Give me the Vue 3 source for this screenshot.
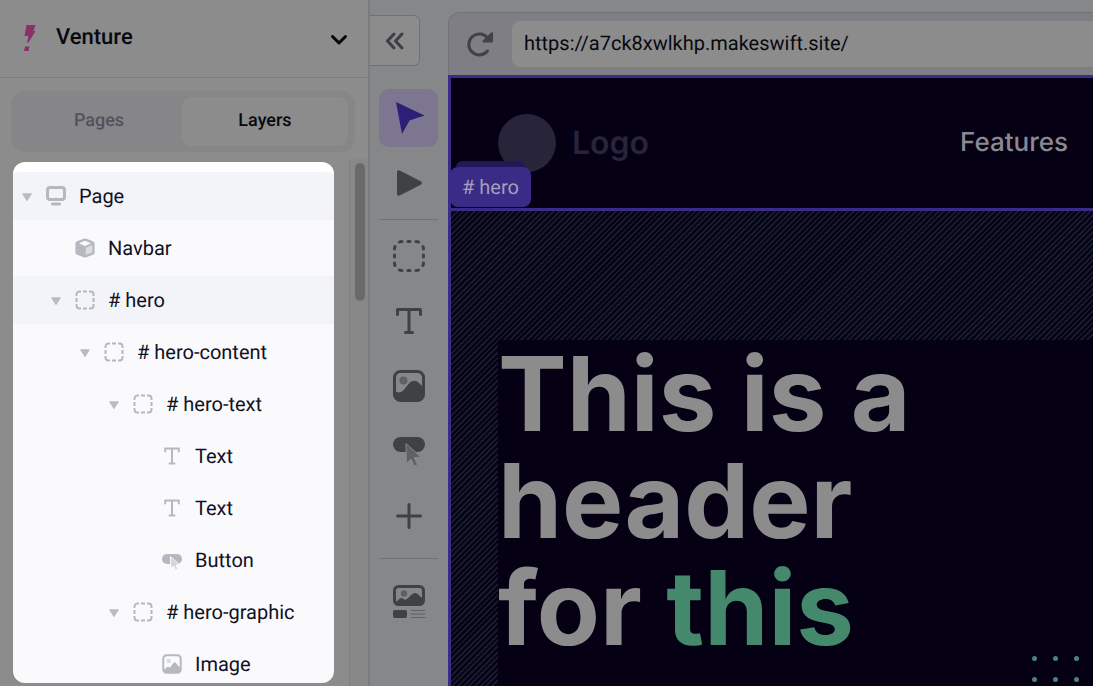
<script setup>
import { ref } from 'vue'

const url = ref('https://a7ck8xwlkhp.makeswift.site/')

const layers = [
  { name: 'Page', icon: 'page', depth: 0, open: true, active: true },
  { name: 'Navbar', icon: 'cube', depth: 1 },
  { name: '# hero', icon: 'box', depth: 1, open: true, active: true },
  { name: '# hero-content', icon: 'box', depth: 2, open: true },
  { name: '# hero-text', icon: 'box', depth: 3, open: true },
  { name: 'Text', icon: 'text', depth: 4 },
  { name: 'Text', icon: 'text', depth: 4 },
  { name: 'Button', icon: 'button', depth: 4 },
  { name: '# hero-graphic', icon: 'box', depth: 3, open: true },
  { name: 'Image', icon: 'image', depth: 4 },
]
</script>

<template>
  <div class="app">
    <aside class="sidebar">
      <button class="site" type="button">
        <svg class="bolt" viewBox="0 0 14 28" aria-hidden="true">
          <path d="M4.500 1H13.500L11.500 7H13.500L6.500 18.500H5L6.500 12H2.500Z" />
          <path d="M3 22.500H7.500L6.500 27H2Z" />
        </svg>
        <span class="site-name">Venture</span>
        <svg class="chevron" viewBox="0 0 18 12" aria-hidden="true">
          <path d="M2.500 2.500 9 9l6.500-6.500" />
        </svg>
      </button>

      <div class="tabs" role="tablist">
        <button class="tab" role="tab" type="button" aria-selected="false">Pages</button>
        <button class="tab selected" role="tab" type="button" aria-selected="true">Layers</button>
      </div>

      <div class="list">
        <ul class="tree" aria-label="Layers">
          <li
            v-for="(layer, i) in layers"
            :key="i"
            class="row"
            :class="{ active: layer.active }"
            :style="{ paddingLeft: 9 + layer.depth * 29 + 'px' }"
          >
            <span class="caret">
              <svg v-if="layer.open" viewBox="0 0 10 8" aria-hidden="true">
                <path d="M1 .3h8a.7.7 0 0 1 .6 1L5.600 7.400a.7.7 0 0 1-1.200 0L.4 1.300A.7.7 0 0 1 1 .3Z" />
              </svg>
            </span>
            <svg class="icon" viewBox="0 0 20 20" aria-hidden="true">
              <template v-if="layer.icon === 'page'">
                <rect class="line" x="1.500" y="1.500" width="17" height="12" rx="2.500" />
                <path class="line" d="M6.500 18h7" />
              </template>
              <template v-else-if="layer.icon === 'cube'">
                <path class="fill" d="M8.800.8a3 3 0 0 1 2.400 0l6.800 2.500a2.500 2.500 0 0 1 1.600 2.400v8.600a2.500 2.500 0 0 1-1.600 2.400l-6.800 2.600a3 3 0 0 1-2.400 0L2 16.700a2.500 2.500 0 0 1-1.600-2.400V5.700A2.500 2.500 0 0 1 2 3.300Z" />
                <path class="light" d="m10 2.800 6 2.500-6 2.600-6-2.600Z" />
                <path class="mid" d="m10.800 9.800 6.500-2.600v7.300l-6.500 2.600Z" />
              </template>
              <path
                v-else-if="layer.icon === 'box'"
                class="dash"
                d="M1.500 6V4.500a3 3 0 0 1 3-3H6M8 1.500h4M14 1.500h1.500a3 3 0 0 1 3 3V6M18.500 8v4M18.500 14v1.500a3 3 0 0 1-3 3H14M12 18.500H8M6 18.500H4.500a3 3 0 0 1-3-3V14M1.500 12V8"
              />
              <path
                v-else-if="layer.icon === 'text'"
                class="glyph"
                d="M3.200 5.500V2.500h13.600v3M10 2.500v15M7.500 17.500h5"
              />
              <template v-else-if="layer.icon === 'button'">
                <rect class="fill" x="0" y="4" width="20" height="10" rx="5" />
                <path class="pointer" d="m8.500 7 .4 11.500 2.800-2.400 1.800 4 2.300-1-1.800-4 3.300-.2Z" />
              </template>
              <template v-else>
                <rect class="frame-small" x="1.250" y="1.250" width="17.500" height="17.500" rx="3.500" />
                <circle class="mid" cx="6.800" cy="7" r="2.300" />
                <path class="fill" d="m1.500 16 4.500-3.500 1.800 1.200 4.700-6 6 6.300v3l-1.500 1.500H3Z" />
              </template>
            </svg>
            <span class="name">{{ layer.name }}</span>
          </li>
        </ul>
        <div class="track"><div class="thumb"></div></div>
      </div>
    </aside>

    <nav class="tools" aria-label="Tools">
      <button class="collapse" type="button" aria-label="Collapse panel">
        <svg viewBox="0 0 20 18" aria-hidden="true">
          <path d="M9 2 2.500 9 9 16M17 2l-6.500 7 6.500 7" />
        </svg>
      </button>
      <div class="group">
        <button class="tool on" type="button" aria-label="Select">
          <svg viewBox="0 0 34 34"><path class="arrow" d="M4 1 32.500 14.500 17.500 19.500 10 33Z" /></svg>
        </button>
        <button class="tool" type="button" aria-label="Preview">
          <svg viewBox="0 0 34 34"><path class="solid" d="M5 6c0-1.500 1.300-2.300 2.700-1.600l21 10.900c1.500.8 1.500 2.600 0 3.400l-21 10.900c-1.400.7-2.700-.1-2.700-1.600Z" /></svg>
        </button>
      </div>
      <div class="group">
        <button class="tool" type="button" aria-label="Box">
          <svg viewBox="0 0 34 34">
            <path
              class="dots-line"
              d="M7.500 3Q8.500 2.500 10 2.500M16 2.500h2M24 2.500Q25.500 2.500 26.500 3M31 7.500Q31.500 8.500 31.500 10M31.500 16v2M31.500 24Q31.500 25.500 31 26.500M26.500 31Q25.500 31.500 24 31.500M18 31.500h-2M10 31.500Q8.500 31.500 7.500 31M3 26.500Q2.500 25.500 2.500 24M2.500 18v-2M2.500 10Q2.500 8.500 3 7.500"
            />
          </svg>
        </button>
        <button class="tool" type="button" aria-label="Text">
          <svg viewBox="0 0 34 34"><path class="serif" d="M5.500 10.500V5.500h23v5M17 5.500v23M13.500 28.500h7" /></svg>
        </button>
        <button class="tool" type="button" aria-label="Image">
          <svg viewBox="0 0 34 34">
            <rect class="frame" x="2.500" y="2.500" width="29" height="29" rx="6" />
            <circle class="soft" cx="11.500" cy="11.500" r="4" />
            <path class="solid" d="M2.500 21.500c4 3 7 2.500 10-1.500l4.500-5.500c3-3.700 7-3.500 10-.5l4.500 4.500V26a5.500 5.500 0 0 1-5.500 5.500H8A5.500 5.500 0 0 1 2.500 26Z" />
          </svg>
        </button>
        <button class="tool" type="button" aria-label="Button">
          <svg viewBox="0 0 34 34">
            <rect class="solid" x="1" y="3" width="32" height="15" rx="7.500" />
            <path class="cursor" d="m14 10 .4 19.500 4.800-4.500 3.200 7 3-1.300-3.200-7 6.400-.6Z" />
          </svg>
        </button>
        <button class="tool" type="button" aria-label="Add">
          <svg viewBox="0 0 34 34"><path class="plus" d="M17 5.500v23M5.500 17h23" /></svg>
        </button>
      </div>
      <div class="group last">
        <button class="tool" type="button" aria-label="Sections">
          <svg viewBox="0 0 34 34">
            <rect class="frame" x="2.500" y="1.500" width="29" height="18" rx="4" />
            <circle class="soft" cx="12" cy="8.500" r="3.200" />
            <path class="solid" d="M3 17c3-.5 4.500-4.500 6.500-4 2 .4 2.500 2.500 4.500 1.500 3.500-2 6-6.500 9-6.500s5 4 8 5.500v5l-1 1H4Z" />
            <rect class="solid" x="1" y="25" width="14" height="8" rx="2" />
            <path class="thin" d="M19 25.500h14M19 29h14M19 32.500h14" />
          </svg>
        </button>
      </div>
    </nav>

    <main class="stage">
      <div class="browser">
        <div class="bar">
          <button class="reload" type="button" aria-label="Reload">
            <svg viewBox="0 0 28 28" aria-hidden="true">
              <path class="arc" d="M22 8.500A10.500 10.500 0 1 0 21.500 21" />
              <path class="tip" d="M25.200 2.500a1 1 0 0 1 1.800.6v8.400a.9.900 0 0 1-.9.900h-8.600a1 1 0 0 1-.7-1.800Z" />
            </svg>
          </button>
          <input v-model="url" class="url" type="text" aria-label="Address" spellcheck="false" />
        </div>

        <div class="page">
          <header class="navbar">
            <span class="mark"></span>
            <span class="logo">Logo</span>
            <a class="link" href="#features">Features</a>
            <span class="label">#&nbsp;hero</span>
          </header>
          <section class="hero">
            <div class="content">
              <h1>This is a<br />header<br />for <em>this</em></h1>
              <div class="dots" aria-hidden="true"><i v-for="n in 6" :key="n"></i></div>
            </div>
          </section>
        </div>
      </div>
    </main>
  </div>
</template>

<style>
body {
  overflow: hidden;
  background: #868789;
}
</style>

<style scoped>
.app {
  display: flex;
  height: 100vh;
  font-family: Roboto, "Liberation Sans", sans-serif;
  color: #08080f;
  text-rendering: geometricPrecision;
}
.app * {
  box-sizing: border-box;
}
button {
  margin: 0;
  padding: 0;
  border: 0;
  background: none;
  font: inherit;
  color: inherit;
  text-rendering: inherit;
}
svg {
  display: block;
  fill: none;
  stroke-linecap: round;
  stroke-linejoin: round;
}

.sidebar {
  display: flex;
  flex-direction: column;
  flex: none;
  width: 370px;
  border-right: 2px solid #7b7c80;
  background: #8c8c8c;
}
.site {
  display: flex;
  align-items: center;
  flex: none;
  height: 78px;
  padding: 0 20px 2px 22px;
  border-bottom: 1px solid #7c7d83;
}
.bolt {
  width: 14px;
  height: 28px;
  fill: #8a2f68;
}
.site-name {
  margin-left: 20px;
  font-size: 22px;
  font-weight: 500;
}
.chevron {
  width: 18px;
  height: 12px;
  margin: 4px 0 0 auto;
  stroke: #050508;
  stroke-width: 3;
}
.tabs {
  display: flex;
  flex: none;
  height: 61px;
  margin: 13px 13px 0 11px;
  padding: 6px 7px 6px 5px;
  border-radius: 14px;
  background: #868688;
}
.tab {
  flex: 1;
  padding-bottom: 2px;
  border-radius: 9px;
  font-size: 18px;
  font-weight: 500;
  color: #50525e;
}
.tab.selected {
  background: #8c8c8c;
  color: #08080f;
}

.list {
  display: flex;
  flex: 1;
  gap: 15px;
  min-height: 0;
  margin-top: 7px;
  padding-left: 13px;
}
.tree {
  display: flex;
  flex: 1;
  flex-direction: column;
  gap: 4px;
  margin: 3px 0;
  padding: 0;
  overflow: hidden;
  border-top: 10px solid #fff;
  border-radius: 12px;
  background: #fafafd;
  list-style: none;
}
.row {
  display: flex;
  align-items: center;
  flex: none;
  height: 48px;
  font-size: 20px;
  color: #11111f;
}
.row.active {
  background: #f3f4fa;
}
.caret {
  width: 10px;
  margin-right: 14px;
}
.caret svg {
  width: 10px;
  height: 8px;
  margin-top: 2px;
  fill: #b9bbc1;
}
.icon {
  flex: none;
  width: 20px;
  height: 20px;
  margin-right: 13px;
}
.line {
  stroke: #b6b8c0;
  stroke-width: 3;
}
.frame-small {
  stroke: #b6b8c0;
  stroke-width: 2;
}
.fill {
  fill: #b6b8c0;
}
.light {
  fill: #fafafd;
}
.mid {
  fill: #dcdde2;
}
.dash {
  stroke: #b6b8c0;
  stroke-width: 2;
  stroke-linecap: butt;
}
.glyph {
  stroke: #b6b8c0;
  stroke-width: 2;
}
.pointer {
  fill: #d3d5da;
  stroke: #fafafd;
  stroke-width: 1;
}
.track {
  width: 19px;
  padding: 4px 0 0 5px;
  border-left: 1px solid #808080;
  background: #888;
}
.thumb {
  width: 10px;
  height: 138px;
  border-radius: 5px;
  background: #6a6a6b;
}

.tools {
  display: flex;
  flex: none;
  flex-direction: column;
  width: 78px;
  padding-top: 15px;
  background: #868789;
}
.collapse {
  display: grid;
  place-items: center;
  width: 50px;
  height: 51px;
  border: 1px solid #707176;
  border-left: 0;
  border-radius: 0 6px 6px 0;
  background: #8c8c8c;
}
.collapse svg {
  width: 20px;
  height: 18px;
  stroke: #3e3f44;
  stroke-width: 3;
}
.group {
  display: flex;
  flex-direction: column;
  gap: 7px;
  margin: 0 10px 0 9px;
  padding: 7px 0;
  border-bottom: 1px solid #727377;
}
.collapse + .group {
  padding-top: 23px;
}
.group:nth-of-type(2) {
  padding-bottom: 13px;
}
.group.last {
  padding-top: 14px;
  border-bottom: 0;
}
.tool {
  display: grid;
  place-items: center;
  height: 58px;
  border-radius: 10px;
}
.tool.on {
  background: #7c7690;
}
.tool svg {
  width: 34px;
  height: 34px;
}
.arrow {
  fill: #2b1f78;
}
.solid {
  fill: #404144;
}
.soft {
  fill: #5f6063;
}
.dots-line,
.serif,
.plus,
.frame {
  stroke: #404144;
  stroke-width: 3;
}
.cursor {
  fill: #5f6063;
  stroke: #868789;
  stroke-width: 1;
}
.thin {
  stroke: #606164;
  stroke-width: 1;
}

.stage {
  flex: 1;
  min-width: 0;
  padding-top: 12px;
  background: #868789;
}
.browser {
  display: flex;
  flex-direction: column;
  height: 100%;
}
.bar {
  display: flex;
  align-items: center;
  flex: none;
  height: 63px;
  border: 1px solid #737279;
  border-width: 1px 0 0 1px;
  border-radius: 12px 0 0 0;
  background: #7f7e84;
}
.reload {
  margin: 0 18px 0 17px;
}
.reload svg {
  width: 28px;
  height: 28px;
}
.arc {
  stroke: #424246;
  stroke-width: 3;
}
.tip {
  fill: #424246;
}
.url {
  flex: 1;
  min-width: 0;
  height: 46px;
  padding: 0 12px 2px;
  border: 0;
  border-radius: 8px 0 0 8px;
  outline: 0;
  background: #8c8c8c;
  font: 20px Roboto, "Liberation Sans", sans-serif;
  color: #08080f;
  text-rendering: inherit;
}
.page {
  display: flex;
  flex: 1;
  flex-direction: column;
  min-height: 0;
  border: 3px solid #392b86;
  border-width: 3px 0 0 3px;
  background: #050014;
  font-family: Inter, "Liberation Sans", sans-serif;
}
.navbar {
  position: relative;
  display: flex;
  align-items: center;
  flex: none;
  height: 133px;
  padding: 0 25px 0 47px;
  border-bottom: 3px solid #392b86;
}
.mark {
  width: 58px;
  height: 58px;
  border-radius: 50%;
  background: #28243a;
}
.logo {
  padding-bottom: 2px;
  margin-left: 16px;
  font-size: 32px;
  font-weight: 600;
  color: #28243a;
}
.link {
  margin-left: auto;
  padding-bottom: 2px;
  font-size: 26px;
  font-weight: 500;
  text-decoration: none;
  color: #8a8990;
}
.label {
  position: absolute;
  left: -1px;
  bottom: 1px;
  padding: 0 12px;
  border-radius: 8px;
  background: #392b86;
  font: 20px/40px Roboto, "Liberation Sans", sans-serif;
  color: #a39fb8;
}
.label::before {
  content: "";
  position: absolute;
  inset: -6px 6px auto;
  height: 6px;
  border-radius: 6px 6px 0 0;
  background: #21185a;
}
.hero {
  flex: 1;
  min-height: 0;
  padding: 129px 0 0 47px;
  overflow: hidden;
  background: repeating-linear-gradient(-45deg, #141a2c 0 2px, #050014 2px 4px);
}
.content {
  display: flex;
  align-items: flex-start;
  justify-content: space-between;
  height: 100%;
  padding-right: 14px;
  background: #050014;
}
h1 {
  margin: 0;
  font-size: 103px;
  font-weight: 700;
  line-height: 107px;
  color: #8c8c8c;
}
em {
  font-style: normal;
  color: #44896b;
}
.dots {
  display: grid;
  grid-template-columns: repeat(3, 5px);
  gap: 16px;
  margin-top: 316px;
}
.dots i {
  width: 5px;
  height: 5px;
  border-radius: 50%;
  background: #4e8278;
}
</style>
